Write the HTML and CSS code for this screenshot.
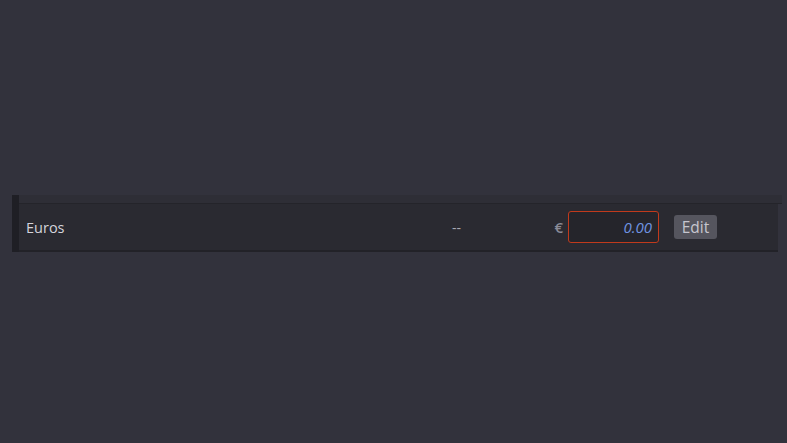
FILE: index.html
```html
<!DOCTYPE html>
<html>
<head>
<meta charset="utf-8">
<link rel="stylesheet" href="styles.css">
</head>
<body>
<div class="page">
  <div class="panel">
    <div class="strip"></div>
    <div class="table">
      <div class="head"></div>
      <div class="row">
        <div class="name">Euros</div>
        <div class="dash">--</div>
        <div class="amount">
          <span class="cur">€</span>
          <div class="input">0.00</div>
        </div>
        <button class="edit">Edit</button>
      </div>
    </div>
  </div>
</div>
</body>
</html>
```
FILE: styles.css
```css
html, body {
  margin: 0;
  padding: 0;
  background: #32323c;
  height: 100%;
}
body {
  font-family: "Open Sans", "Noto Sans", sans-serif;
}
.page {
  padding: 195px 5px 0 12px;
}
.panel {
  display: flex;
}
.strip {
  width: 7px;
  background: #1f1f25;
  height: 57px;
}
.table {
  flex: 1;
  display: flex;
  flex-direction: column;
}
.head {
  height: 8px;
  background: #2e2e36;
  border-bottom: 1px solid #24242a;
}
.row {
  height: 46px;
  margin-right: 4px;
  background: #2a2a31;
  border-bottom: 2px solid #222228;
  display: flex;
  align-items: center;
  padding: 0 61px 0 7px;
  color: #c9c9d2;
  font-size: 14px;
}
.name {
  flex: 1;
  color: #d4d4dc;
  font-size: 14.5px;
}
.dash {
  width: 80px;
  text-align: center;
  margin-right: 58px;
  color: #a8a8b2;
  font-size: 14px;
}
.amount {
  display: flex;
  align-items: center;
  gap: 5px;
}
.cur {
  color: #8a8a96;
  font-size: 15px;
  font-weight: 600;
}
.input {
  width: 91px;
  height: 32px;
  box-sizing: border-box;
  border: 1px solid #c13a1c;
  border-radius: 3px;
  background: #25252b;
  color: #6f93e0;
  font-style: italic;
  font-size: 15px;
  text-align: right;
  padding-right: 6px;
  line-height: 30px;
}
.edit {
  margin-left: 15px;
  width: 43px;
  height: 24px;
  border: none;
  border-radius: 3px;
  background: #55555e;
  color: #c6c6ce;
  font-family: "Open Sans", "Noto Sans", sans-serif;
  font-size: 15.5px;
  padding: 0;
  line-height: 24px;
}
```
